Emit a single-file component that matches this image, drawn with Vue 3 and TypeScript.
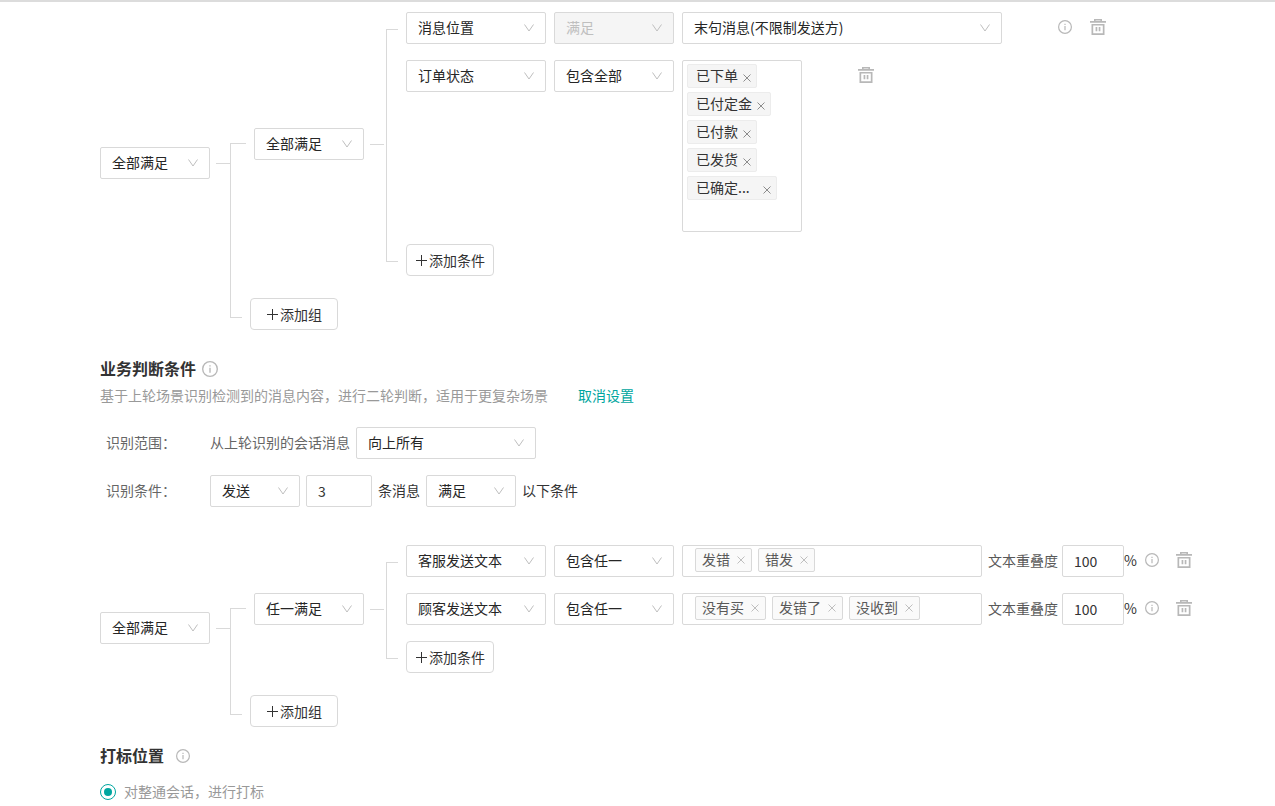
<script setup lang="ts">
import { reactive, ref } from 'vue'

interface Condition {
  subject: string
  operator: string
  locked?: boolean
  kind: 'position' | 'status' | 'text'
  value?: string
  tags?: string[]
  overlap?: number
}

interface Tree {
  id: string
  root: string
  group: string
  conditions: Condition[]
}

const relations = ['全部满足', '任一满足']
const subjects = ['消息位置', '订单状态', '客服发送文本', '顾客发送文本']
const operators = ['满足', '包含全部', '包含任一']
const positions = ['末句消息(不限制发送方)']

const sceneTree = reactive<Tree>({
  id: 'scene',
  root: '全部满足',
  group: '全部满足',
  conditions: [
    { subject: '消息位置', operator: '满足', locked: true, kind: 'position', value: '末句消息(不限制发送方)' },
    {
      subject: '订单状态',
      operator: '包含全部',
      kind: 'status',
      tags: ['已下单', '已付定金', '已付款', '已发货', '已确定...'],
    },
  ],
})

const businessTree = reactive<Tree>({
  id: 'business',
  root: '全部满足',
  group: '任一满足',
  conditions: [
    { subject: '客服发送文本', operator: '包含任一', kind: 'text', tags: ['发错', '错发'], overlap: 100 },
    { subject: '顾客发送文本', operator: '包含任一', kind: 'text', tags: ['没有买', '发错了', '没收到'], overlap: 100 },
  ],
})

const blocks = [sceneTree, businessTree]
const range = ref('向上所有')
const action = ref('发送')
const count = ref('3')
const match = ref('满足')
const markScope = ref('whole')

function removeTag(condition: Condition, index: number) {
  condition.tags?.splice(index, 1)
}

function removeCondition(tree: Tree, index: number) {
  tree.conditions.splice(index, 1)
}
</script>

<template>
  <main class="page">
    <template v-for="tree in blocks" :key="tree.id">
      <section v-if="tree.id === 'business'" class="business">
        <h2 class="title">
          <span class="lift">业务判断条件</span>
          <button type="button" class="icon" aria-label="说明">
            <svg width="16" height="16" viewBox="0 0 14 14"><circle cx="7" cy="7" r="6.4" /><path d="M7 6v4.2M7 3.7v1.2" /></svg>
          </button>
        </h2>
        <p class="desc">
          <span>基于上轮场景识别检测到的消息内容，进行二轮判断，适用于更复杂场景</span>
          <a href="#" class="link">取消设置</a>
        </p>
        <div class="form-row">
          <label class="form-label lift" for="range">识别范围：</label>
          <span class="muted lift">从上轮识别的会话消息</span>
          <span class="select w180">
            <select id="range" v-model="range"><option>向上所有</option></select>
            <svg class="chevron" width="10" height="8" viewBox="0 0 10 8"><path d="M0.5 0.5 5 7 9.5 0.5" /></svg>
          </span>
        </div>
        <div class="form-row">
          <label class="form-label lift" for="action">识别条件：</label>
          <span class="select w90">
            <select id="action" v-model="action"><option>发送</option></select>
            <svg class="chevron" width="10" height="8" viewBox="0 0 10 8"><path d="M0.5 0.5 5 7 9.5 0.5" /></svg>
          </span>
          <input id="count" v-model="count" class="number w66" type="text" aria-label="消息条数" />
          <label class="lift" for="count">条消息</label>
          <span class="select w90">
            <select id="match" v-model="match"><option>满足</option></select>
            <svg class="chevron" width="10" height="8" viewBox="0 0 10 8"><path d="M0.5 0.5 5 7 9.5 0.5" /></svg>
          </span>
          <label class="lift" for="match">以下条件</label>
        </div>
      </section>

      <section class="tree">
        <span class="select w110 root">
          <select v-model="tree.root" aria-label="组间关系"><option v-for="r in relations" :key="r">{{ r }}</option></select>
          <svg class="chevron" width="10" height="8" viewBox="0 0 10 8"><path d="M0.5 0.5 5 7 9.5 0.5" /></svg>
        </span>
        <span class="stub"></span>
        <div class="branches">
          <div class="branch">
            <div class="arm arm-first"><i></i></div>
            <div class="group">
              <span class="select w110">
                <select v-model="tree.group" aria-label="组内关系"><option v-for="r in relations" :key="r">{{ r }}</option></select>
                <svg class="chevron" width="10" height="8" viewBox="0 0 10 8"><path d="M0.5 0.5 5 7 9.5 0.5" /></svg>
              </span>
              <span class="stub stub-inner"></span>
              <span class="bracket"></span>
              <div class="conditions">
                <div v-for="(c, ci) in tree.conditions" :key="ci" class="condition">
                  <span class="select w140">
                    <select v-model="c.subject" aria-label="条件"><option v-for="s in subjects" :key="s">{{ s }}</option></select>
                    <svg class="chevron" width="10" height="8" viewBox="0 0 10 8"><path d="M0.5 0.5 5 7 9.5 0.5" /></svg>
                  </span>
                  <span class="select w120">
                    <select v-model="c.operator" :disabled="c.locked" aria-label="判断方式"><option v-for="o in operators" :key="o">{{ o }}</option></select>
                    <svg class="chevron" width="10" height="8" viewBox="0 0 10 8"><path d="M0.5 0.5 5 7 9.5 0.5" /></svg>
                  </span>

                  <span v-if="c.kind === 'position'" class="select w320">
                    <select v-model="c.value" aria-label="消息位置"><option v-for="p in positions" :key="p">{{ p }}</option></select>
                    <svg class="chevron" width="10" height="8" viewBox="0 0 10 8"><path d="M0.5 0.5 5 7 9.5 0.5" /></svg>
                  </span>

                  <div v-else-if="c.kind === 'status'" class="status-box">
                    <span v-for="(t, ti) in c.tags" :key="t" class="status-tag">
                      <span class="status-name lift" :class="{ clipped: t.endsWith('...') }">{{ t }}</span>
                      <button type="button" class="cross dark" :aria-label="'移除' + t" @click="removeTag(c, ti)">
                        <svg width="8" height="8" viewBox="0 0 8 8"><path d="M0.5 0.5l7 7M7.5 0.5l-7 7" /></svg>
                      </button>
                    </span>
                  </div>

                  <div v-else class="overlap">
                    <div class="text-box">
                      <span v-for="(t, ti) in c.tags" :key="t" class="text-tag">
                        <span class="lift">{{ t }}</span>
                        <button type="button" class="cross" :aria-label="'移除' + t" @click="removeTag(c, ti)">
                          <svg width="8" height="8" viewBox="0 0 8 8"><path d="M0.5 0.5l7 7M7.5 0.5l-7 7" /></svg>
                        </button>
                      </span>
                    </div>
                    <label class="overlap-label lift" :for="'overlap-' + ci">文本重叠度</label>
                    <input :id="'overlap-' + ci" v-model="c.overlap" class="number w62" type="text" />
                    <span class="percent lift">%</span>
                  </div>

                  <div class="actions" :class="{ near: c.kind === 'text' }">
                    <button v-if="c.kind !== 'status'" type="button" class="icon" aria-label="说明">
                      <svg width="14" height="14" viewBox="0 0 14 14"><circle cx="7" cy="7" r="6.4" /><path d="M7 6v4.2M7 3.7v1.2" /></svg>
                    </button>
                    <button type="button" class="icon trash" aria-label="删除" @click="removeCondition(tree, ci)">
                      <svg width="16" height="16" viewBox="0 0 16 16">
                        <path class="solid" fill-rule="evenodd" d="M4 0h8v2h4v1.7H0V2h4zM5.6 1.4V2h4.8v-.6zM1.5 5h13v11h-13zM3.2 6.4v7.9h9.6V6.4zM5.6 8h1.7v4.2H5.6zM8.7 8h1.7v4.2H8.7z" />
                      </svg>
                    </button>
                  </div>
                </div>
                <button type="button" class="add">
                  <svg width="14" height="14" viewBox="0 0 14 14"><path d="M1 7.5h11M6.5 2v11" /></svg>添加条件
                </button>
              </div>
            </div>
          </div>
          <div class="trunk"></div>
          <div class="branch">
            <div class="arm arm-last"><i></i></div>
            <button type="button" class="add">
              <svg width="14" height="14" viewBox="0 0 14 14"><path d="M1 7.5h11M6.5 2v11" /></svg>添加组
            </button>
          </div>
        </div>
      </section>
    </template>

    <section class="mark">
      <h2 class="title wide">
        <span class="lift">打标位置</span>
        <button type="button" class="icon" aria-label="说明">
          <svg width="14" height="14" viewBox="0 0 14 14"><circle cx="7" cy="7" r="6.4" /><path d="M7 6v4.2M7 3.7v1.2" /></svg>
        </button>
      </h2>
      <label class="radio">
        <input v-model="markScope" type="radio" name="mark" value="whole" />
        <span class="lift">对整通会话，进行打标</span>
      </label>
    </section>
  </main>
</template>

<style>
body {
  margin: 0;
  background: #fff;
}
</style>

<style scoped>
.page {
  box-sizing: border-box;
  padding: 10px 0 0 100px;
  border-top: 2px solid #dcdcdc;
  color: #333;
  font-family: 'Noto Sans CJK SC', 'Noto Sans', sans-serif;
  font-size: 14px;
  line-height: 22px;
}

.page *,
.page *::before {
  box-sizing: border-box;
}

button,
input,
select {
  margin: 0;
  font: inherit;
  color: inherit;
}

button {
  padding: 0;
  border: 0;
  background: none;
  cursor: pointer;
}

svg {
  display: block;
  flex: none;
  fill: none;
  stroke: currentColor;
}

label,
span {
  white-space: nowrap;
}

/* The CJK face sits low in its line box; this centres it optically. */
.lift {
  padding-bottom: 2px;
}

.select {
  display: inline-grid;
  flex: none;
  align-items: center;
  color: #262626;
}

.select select {
  grid-area: 1 / 1;
  width: 100%;
  height: 32px;
  padding: 0 28px 2px 11px;
  border: 1px solid #d9d9d9;
  border-radius: 2px;
  background: #fff;
  appearance: none;
}

.select select:disabled {
  background: #f5f5f5;
  color: #bfbfbf;
  opacity: 1;
}

.chevron {
  grid-area: 1 / 1;
  justify-self: end;
  margin-right: 12px;
  color: #bfbfbf;
  pointer-events: none;
}

.number {
  flex: none;
  height: 32px;
  padding: 0 11px;
  border: 1px solid #d9d9d9;
  border-radius: 2px;
  background: #fff;
}

.w62 { width: 62px; }
.w66 { width: 66px; }
.w90 { width: 90px; }
.w110 { width: 110px; }
.w120 { width: 120px; }
.w140 { width: 140px; }
.w180 { width: 180px; }
.w320 { width: 320px; }

.tree {
  display: flex;
  align-items: center;
}

.root {
  margin-bottom: 16px;
}

.stub {
  flex: none;
  width: 14px;
  height: 1px;
  margin: 0 0 16px 6px;
  background: #d9d9d9;
}

.stub-inner {
  margin: 0 2px 0 6px;
}

.branch {
  display: flex;
}

.arm {
  display: flex;
  flex: none;
  margin-right: 8px;
}

.arm i {
  width: 100%;
  border-left: 1px solid #d9d9d9;
}

.arm-first {
  width: 16px;
  align-items: flex-end;
}

.arm-first i {
  height: calc(50% + 1px);
  border-top: 1px solid #d9d9d9;
}

.arm-last {
  width: 12px;
}

.arm-last i {
  height: 20px;
  border-bottom: 1px solid #d9d9d9;
}

.trunk {
  height: 22px;
  border-left: 1px solid #d9d9d9;
}

.group {
  display: flex;
  align-items: center;
}

.bracket {
  flex: none;
  align-self: stretch;
  width: 12px;
  margin: 17px 8px 14px 0;
  border: 1px solid #d9d9d9;
  border-right: 0;
}

.conditions {
  display: flex;
  flex-direction: column;
  align-items: flex-start;
  gap: 16px;
}

.condition {
  display: flex;
  align-items: flex-start;
  gap: 8px;
}

.add {
  display: flex;
  align-items: center;
  justify-content: center;
  width: 88px;
  height: 32px;
  border: 1px solid #d9d9d9;
  border-radius: 4px;
  background: #fff;
  white-space: nowrap;
}

.status-box {
  display: flex;
  flex-direction: column;
  align-items: flex-start;
  gap: 4px;
  width: 120px;
  margin-bottom: -4px;
  padding: 3px 4px 31px;
  border: 1px solid #d9d9d9;
  border-radius: 2px;
}

.status-tag {
  display: flex;
  align-items: center;
  gap: 5px;
  height: 24px;
  padding: 0 5px 0 8px;
  border: 1px solid #ececec;
  border-radius: 2px;
  background: #f5f5f5;
}

.status-name.clipped {
  width: 62px;
}

.cross {
  display: flex;
  color: #bfbfbf;
}

.cross.dark {
  padding-top: 3px;
  color: #8c8c8c;
}

.overlap {
  display: flex;
  align-items: center;
}

.text-box {
  display: flex;
  gap: 6px;
  width: 300px;
  height: 32px;
  padding: 2px 12px;
  border: 1px solid #d9d9d9;
  border-radius: 2px;
}

.text-tag {
  display: flex;
  align-items: center;
  gap: 7px;
  height: 24px;
  padding: 0 6px;
  border: 1px solid #d9d9d9;
  border-radius: 2px;
  background: #fafafa;
  color: #595959;
}

.overlap-label {
  margin: 0 4px 0 6px;
  color: #595959;
}

.actions {
  display: flex;
  align-items: center;
  gap: 18px;
  height: 30px;
  margin-left: 48px;
}

.actions.near {
  gap: 17px;
  margin-left: 0;
}

.icon {
  display: inline-flex;
  color: #b8b8b8;
}

.icon svg {
  stroke-width: 1.2;
}

.trash .solid {
  fill: currentColor;
  stroke: none;
}

.title {
  display: flex;
  align-items: center;
  gap: 6px;
  height: 24px;
  margin: 0;
  font-size: 16px;
  font-weight: 700;
}

.title.wide {
  gap: 12px;
}

.business {
  padding: 27px 0 38px;
}

.desc {
  display: flex;
  gap: 30px;
  margin: 3px 0 21px;
  color: #999;
}

.link {
  color: #00a6a0;
  text-decoration: none;
  white-space: nowrap;
}

.form-row {
  display: flex;
  align-items: center;
  gap: 6px;
}

.form-row + .form-row {
  margin-top: 16px;
}

.form-label {
  width: 104px;
  padding-left: 6px;
  color: #666;
}

.muted {
  color: #666;
}

.mark {
  padding-top: 17px;
}

.radio {
  display: inline-flex;
  align-items: center;
  gap: 8px;
  margin-top: 12px;
  color: #999;
}

.radio input {
  width: 16px;
  height: 16px;
  padding: 3px;
  border: 1px solid #00a6a0;
  border-radius: 50%;
  appearance: none;
}

.radio input:checked::before {
  content: '';
  display: block;
  width: 8px;
  height: 8px;
  border-radius: 50%;
  background: #00a6a0;
}
</style>
